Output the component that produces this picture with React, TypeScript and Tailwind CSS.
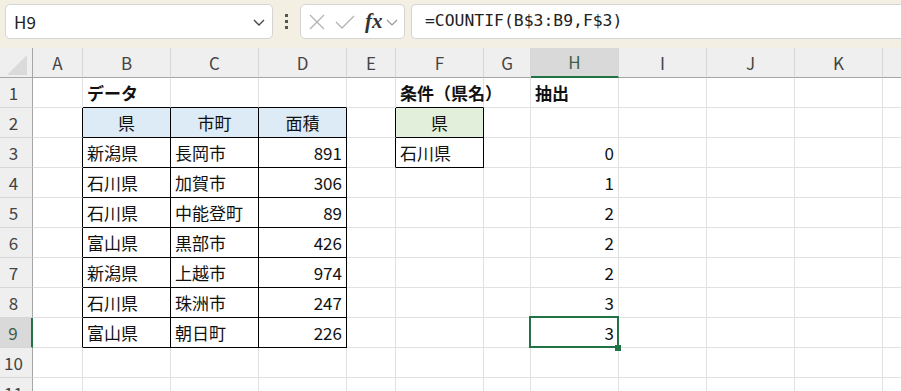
import React from "react";

const COLS = ["A", "B", "C", "D", "E", "F", "G", "H", "I", "J", "K", "L"];

type Cell = { t: string; align?: "l" | "c" | "r"; bold?: boolean; bg?: string };

const data: Record<string, Cell> = {
  "1,1": { t: "データ", bold: true },
  "1,5": { t: "条件（県名）", bold: true },
  "1,7": { t: "抽出", bold: true },
  "2,1": { t: "県", align: "c", bg: "blue" },
  "2,2": { t: "市町", align: "c", bg: "blue" },
  "2,3": { t: "面積", align: "c", bg: "blue" },
  "2,5": { t: "県", align: "c", bg: "green" },
  "3,5": { t: "石川県" },
};

const rowsData: [string, string, string, string][] = [
  ["新潟県", "長岡市", "891", "0"],
  ["石川県", "加賀市", "306", "1"],
  ["石川県", "中能登町", "89", "2"],
  ["富山県", "黒部市", "426", "2"],
  ["新潟県", "上越市", "974", "2"],
  ["石川県", "珠洲市", "247", "3"],
  ["富山県", "朝日町", "226", "3"],
];
rowsData.forEach((r, i) => {
  const row = i + 3;
  data[`${row},1`] = { t: r[0] };
  data[`${row},2`] = { t: r[1] };
  data[`${row},3`] = { t: r[2], align: "r" };
  data[`${row},7`] = { t: r[3], align: "r" };
});

function boxed(r: number, c: number) {
  if (c >= 1 && c <= 3 && r >= 2 && r <= 9) return true;
  if (c === 5 && r >= 2 && r <= 3) return true;
  return false;
}

const font = { fontFamily: '"Noto Sans CJK JP", "Noto Sans", sans-serif' };

function GridCell({ r, c }: { r: number; c: number }) {
  const cell = data[`${r},${c}`];
  const rightBlack = boxed(r, c) || boxed(r, c + 1);
  const bottomBlack = boxed(r, c) || boxed(r + 1, c);
  const align = cell?.align === "c" ? "justify-center" : cell?.align === "r" ? "justify-end pr-[4px]" : "justify-start pl-[4px]";
  const bg = cell?.bg === "blue" ? "bg-[#ddebf7]" : cell?.bg === "green" ? "bg-[#e2efda]" : "bg-white";
  return (
    <div
      className={`flex items-center overflow-visible whitespace-nowrap border-r border-b text-[17px] text-[#111] ${align} ${bg} ${
        rightBlack ? "border-r-black" : "border-r-[#e1e1e1]"
      } ${bottomBlack ? "border-b-black" : "border-b-[#e1e1e1]"} ${cell?.bold ? "font-bold" : "font-normal"}`}
    >
      {cell ? <span className="relative z-10 leading-none">{cell.t}</span> : null}
    </div>
  );
}

export default function App() {
  const rows = Array.from({ length: 11 }, (_, i) => i + 1);
  return (
    <div className="relative h-[391px] w-[901px] overflow-hidden bg-white" style={font}>
      {/* toolbar */}
      <div className="flex h-[48px] items-start bg-[#f3f0e3] pl-[5px] pt-[4px]">
        <div className="flex h-[35px] w-[268px] items-center justify-between rounded-[5px] border border-[#d4d4d4] bg-white pl-[8px] pr-[6px]">
          <span className="text-[17px] text-[#222]">H9</span>
          <svg width="14" height="10" viewBox="0 0 14 10">
            <polyline points="2,3 7,8 12,3" fill="none" stroke="#444" strokeWidth="1.3" />
          </svg>
        </div>
        <div className="flex h-[35px] w-[27px] flex-col items-center justify-center gap-[3px]">
          <div className="h-[3px] w-[3px] bg-[#555]" />
          <div className="h-[3px] w-[3px] bg-[#555]" />
          <div className="h-[3px] w-[3px] bg-[#555]" />
        </div>
        <div className="flex h-[35px] w-[105px] items-center rounded-[5px] border border-[#d4d4d4] bg-white pl-[6px]">
          <svg width="18" height="18" viewBox="0 0 18 18" className="ml-[1px]">
            <line x1="2" y1="2" x2="16" y2="16" stroke="#b3b3b3" strokeWidth="1.3" />
            <line x1="16" y1="2" x2="2" y2="16" stroke="#b3b3b3" strokeWidth="1.3" />
          </svg>
          <svg width="20" height="18" viewBox="0 0 20 18" className="ml-[9px]">
            <polyline points="1,9 7,15 19,3" fill="none" stroke="#b3b3b3" strokeWidth="1.3" />
          </svg>
          <span
            className="ml-[10px] text-[21px] font-bold italic leading-none text-[#333]"
            style={{ fontFamily: '"Liberation Serif", "DejaVu Serif", serif' }}
          >
            fx
          </span>
          <svg width="12" height="8" viewBox="0 0 12 8" className="ml-[3px]">
            <polyline points="1,2 6,7 11,2" fill="none" stroke="#999" strokeWidth="1.2" />
          </svg>
        </div>
        <div className="ml-[6px] flex h-[35px] flex-1 items-center rounded-l-[5px] border border-r-0 border-[#d4d4d4] bg-white pl-[13px]">
          <span
            className="text-[16.4px] text-[#222]"
            style={{ fontFamily: '"DejaVu Sans Mono", "Liberation Mono", monospace' }}
          >
            =COUNTIF(B$3:B9,F$3)
          </span>
        </div>
      </div>

      {/* grid */}
      <div className="relative grid grid-cols-[33px_50px_88px_88px_88px_49px_88px_47px_88px_88px_88px_88px_88px] grid-rows-[30px_repeat(11,30px)]">
        {/* corner */}
        <div className="relative border-r border-b border-r-[#a6a6a6] border-b-[#a6a6a6] bg-[#efefef]">
          <svg width="22" height="22" viewBox="0 0 22 22" className="absolute left-[6px] top-[6px]">
            <polygon points="21,1 21,21 1,21" fill="#dadada" />
          </svg>
        </div>
        {COLS.map((c, i) => (
          <div
            key={c}
            className={`flex items-center justify-center border-r text-[17px] ${
              i === 7
                ? "border-b-2 border-b-[#217346] bg-[#d9d9d9] text-[#3d5f4a]"
                : "border-b border-b-[#a6a6a6] bg-[#efefef] text-[#444]"
            } border-r-[#d6d6d6]`}
          >
            {c}
          </div>
        ))}
        {rows.map((r) => (
          <React.Fragment key={r}>
            <div
              className={`flex items-center justify-center border-b border-b-[#d6d6d6] pr-[5px] text-[17px] ${
                r === 9
                  ? "border-r-2 border-r-[#217346] bg-[#d9d9d9] text-[#3d5f4a]"
                  : "border-r border-r-[#a6a6a6] bg-[#efefef] text-[#444]"
              }`}
            >
              {r}
            </div>
            {COLS.map((_, c) => (
              <GridCell key={c} r={r} c={c} />
            ))}
          </React.Fragment>
        ))}
        {/* selection */}
        <div className="pointer-events-none absolute left-[529px] top-[268px] z-20 h-[32px] w-[90px] border-2 border-[#217346]" />
        <div className="pointer-events-none absolute left-[615px] top-[297px] z-20 h-[6px] w-[6px] bg-[#217346]" />
      </div>
    </div>
  );
}
